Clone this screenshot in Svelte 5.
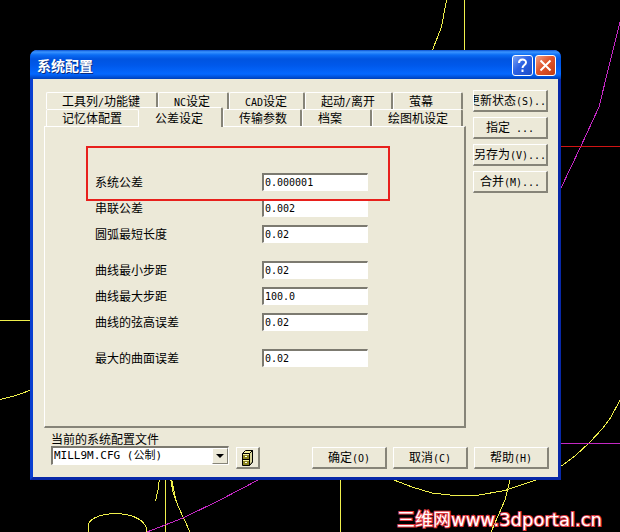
<script lang="ts">
  interface Field {
    id: string;
    label: string;
    value: string;
    marked?: boolean;
  }

  const backTabs = ['工具列/功能键', 'NC设定', 'CAD设定', '起动/离开', '萤幕'];
  const frontTabs = ['记忆体配置', '公差设定', '传输参数', '档案', '绘图机设定'];
  const sideButtons = ['更新状态(S)...', '指定 ...', '另存为(V)...', '合并(M)...'];
  const footerButtons = ['确定(O)', '取消(C)', '帮助(H)'];

  let active = $state('公差设定');

  let groups: Field[][] = $state([
    [
      { id: 'system', label: '系统公差', value: '0.000001', marked: true },
      { id: 'chain', label: '串联公差', value: '0.002' },
      { id: 'arc', label: '圆弧最短长度', value: '0.02' }
    ],
    [
      { id: 'min-step', label: '曲线最小步距', value: '0.02' },
      { id: 'max-step', label: '曲线最大步距', value: '100.0' },
      { id: 'chord', label: '曲线的弦高误差', value: '0.02' }
    ],
    [{ id: 'surface', label: '最大的曲面误差', value: '0.02' }]
  ]);

  // split into half-width and full-width runs
  function runs(text: string) {
    return text.match(/[\x20-\x7e]+|[^\x20-\x7e]+/g) ?? [];
  }
</script>

{#snippet mixed(text: string)}
  <span class="mixed">{#each runs(text) as run}<span class:half={/^[\x20-\x7e]/.test(run)}>{run}</span>{/each}</span>
{/snippet}

{#snippet tabRow(tabs: string[], kind: string)}
  <div class="tab-row {kind}" role="tablist">
    {#each tabs as tab}
      <button
        class="tab"
        class:active={tab === active}
        role="tab"
        aria-selected={tab === active}
        onclick={() => (active = tab)}
      >
        {@render mixed(tab)}
      </button>
    {/each}
  </div>
{/snippet}

<main class="desktop">
  <svg class="drawing" aria-hidden="true">
    <g class="yellow">
      <path d="M446.500 0L441.500 27L432.500 50" />
      <path d="M464.500 0V52" />
      <path d="M0 320.500H32" />
      <path d="M0 399.500L16 395.500L31 390" />
      <path d="M159.500 478L158 490L155.500 501" />
      <path d="M165.500 478V532" />
      <path d="M170.500 478L173 492L178 506L190 532" />
      <path d="M171.500 478L175.500 498" />
      <path d="M88.500 532V524C94 510 140 509 146.500 528V532" />
      <path d="M340.500 478V532" />
      <path d="M394 480L412 487L432 493L454 495.500H476L505 490.500L536 480" />
      <path d="M510.500 478L505 500L491 532" />
      <path d="M560 467L575 456L590 442L603 428L611 417L620 400" />
    </g>
    <g class="magenta">
      <path d="M620 22L610 62L599 107L581 146L561 188" />
      <path d="M560 443.500H2000" />
      <path d="M147 532L183 518L220 500L260 479" />
    </g>
    <path class="red" d="M560 146.500H2000" />
  </svg>

  <section class="dialog" aria-labelledby="dialog-title">
    <header class="titlebar">
      <h1 id="dialog-title">系统配置</h1>
      <button class="caption help" aria-label="帮助">
        <svg viewBox="0 0 19 19">
          <path d="M6 7C6 2.500 13 2.500 13 6.500C13 9 9.500 9 9.500 12M9.500 13.500V16" />
        </svg>
      </button>
      <button class="caption close" aria-label="关闭">
        <svg viewBox="0 0 19 19"><path d="M4.500 4.500L14.500 14.500M14.500 4.500L4.500 14.500" /></svg>
      </button>
    </header>

    <div class="body">
      <div class="top">
        <div class="tabs">
          {@render tabRow(backTabs, 'back')}
          {@render tabRow(frontTabs, 'front')}
          <div class="panel" role="tabpanel">
            {#each groups as group}
              <div class="group">
                {#each group as field (field.id)}
                  <div class="field" class:marked={field.marked}>
                    <label for={field.id}>{field.label}</label>
                    <input id={field.id} type="text" bind:value={field.value} />
                  </div>
                {/each}
              </div>
            {/each}
          </div>
        </div>

        <div class="side">
          {#each sideButtons as text}
            <button class="push">{@render mixed(text)}</button>
          {/each}
        </div>
      </div>

      <footer class="footer">
        <div class="file">
          <label for="config">当前的系统配置文件</label>
          <div class="combo">
            <select id="config">
              <option>MILL9M.CFG (公制)</option>
            </select>
            <span class="arrow" aria-hidden="true"></span>
          </div>
        </div>
        <button class="cabinet" aria-label="选择文件">
          <svg viewBox="0 0 14 18">
            <path d="M1.500 4.500L4.500 1.500H11.500V13L8.500 16.500H1.500Z" fill="#f4f0a0" stroke="#000" />
            <path d="M8.500 4.500L11.500 1.500V13L8.500 16.500Z" fill="#d8d49c" stroke="#000" />
            <path d="M1.500 4.500H8.500M1.500 10.500H8.500" stroke="#000" />
            <path d="M2 6H8V10H2ZM2 12H8V16H2Z" fill="#8a8420" />
            <path d="M4 7.500H6M4 13.500H6" stroke="#fff" />
          </svg>
        </button>
        <div class="actions">
          {#each footerButtons as text}
            <button class="push">{@render mixed(text)}</button>
          {/each}
        </div>
      </footer>
    </div>
  </section>

  <p class="watermark">三维网www.3dportal.cn</p>
</main>

<style>
  :global(body) {
    margin: 0;
    background: #000;
  }

  .desktop {
    position: relative;
    box-sizing: border-box;
    min-height: 100vh;
    padding: 50px 59px 52px 30px;
    overflow: hidden;
    background: #000;
    color: #000;
    font: 12px/14px 'Noto Sans CJK SC', sans-serif;
  }

  .drawing {
    position: absolute;
    inset: 0;
    width: 100%;
    height: 100%;
    fill: none;
    shape-rendering: crispEdges;
  }

  .yellow {
    stroke: #f0f04c;
  }

  .magenta {
    stroke: #c428c4;
  }

  .red {
    stroke: #d01414;
  }

  .dialog {
    position: relative;
    border: 3px solid #0a3fd0;
    border-top: 0;
    border-right-color: #0828a8;
    border-bottom-color: #0828a8;
    border-radius: 7px 7px 0 0;
    background: #ece9d8;
  }

  .titlebar {
    display: flex;
    align-items: center;
    gap: 2px;
    height: 29px;
    margin: 0 -3px;
    padding: 1px 5px 0 7px;
    box-sizing: border-box;
    border-radius: 7px 7px 0 0;
    background: linear-gradient(#0a50d0 0, #3a94ff 2px, #0a6cf4 5px, #0054e0 9px, #0058ea 15px, #0468ff 24px, #0050d8 27px, #0040b8);
  }

  h1 {
    flex: 1;
    margin: 0;
    color: #fff;
    font-size: 14px;
    font-weight: 700;
    line-height: 20px;
    text-shadow: 1px 1px 0 #0a2c80;
  }

  button,
  input,
  select {
    margin: 0;
    padding: 0;
    border-radius: 0;
    box-sizing: border-box;
    color: #000;
    font: inherit;
  }

  .caption {
    width: 21px;
    height: 21px;
    border: 1px solid #fff;
    border-radius: 3px;
    background: linear-gradient(135deg, #7da4f4, #2c62e4 45%, #1c4cc8);
  }

  .caption.close {
    background: linear-gradient(135deg, #f0a088, #e0552c 45%, #c03c14);
  }

  .caption svg {
    display: block;
    fill: none;
    stroke: #fff;
    stroke-width: 2;
  }

  .body {
    padding: 11px 10px 8px 11px;
  }

  .top {
    display: flex;
    gap: 7px;
  }

  .tabs {
    flex: 1;
    min-width: 0;
    padding-top: 2px;
  }

  .tab-row {
    display: grid;
    margin: 0 3px 0 2px;
  }

  .tab-row.back {
    grid-template-columns: 112fr 71fr 76fr 88fr 70fr;
  }

  .tab-row.front {
    grid-template-columns: 93fr 84fr 79fr 70fr 91fr;
  }

  .tab {
    height: 17px;
    padding-left: 15px;
    border: 1px solid #fff;
    border-right: 2px solid #868478;
    border-bottom: 0;
    border-radius: 2px 2px 0 0;
    background: #ece9d8;
    text-align: left;
    line-height: 16px;
  }

  .tab:has(+ .active) {
    border-right: 1px solid #fff;
  }

  .tab.active {
    position: relative;
    height: 20px;
    margin: -2px 0 -1px;
    border-left-color: #ece9d8;
    line-height: 17px;
  }

  .mixed {
    white-space: pre;
  }

  .half {
    font-family: 'DejaVu Sans Mono', monospace;
    font-size: 10px;
  }

  .panel {
    display: flex;
    flex-direction: column;
    gap: 18px;
    padding: 46px 96px 59px 50px;
    border: 1px solid #fff;
    border-right: 2px solid #868478;
    border-bottom: 2px solid #868478;
  }

  .group {
    display: flex;
    flex-direction: column;
    gap: 8px;
  }

  .field {
    position: relative;
    display: flex;
    align-items: center;
    justify-content: space-between;
    height: 18px;
  }

  .field.marked::after {
    content: '';
    position: absolute;
    inset: -27px -22px -10px -9px;
    z-index: 1;
    border: 2px solid #e8201c;
    pointer-events: none;
  }

  .field input {
    width: 106px;
    height: 18px;
    padding: 0 1px;
    border: 2px solid #7c7a70;
    border-right: 1px solid #fff;
    border-bottom: 1px solid #fff;
    background: #fff;
    font: 10px/14px 'DejaVu Sans Mono', monospace;
  }

  .side {
    display: flex;
    flex-direction: column;
    gap: 5px;
  }

  .push,
  .cabinet {
    border: 2px solid #fff;
    border-top-width: 1px;
    border-left-width: 1px;
    border-right-color: #868478;
    border-bottom-color: #868478;
    background: #ece9d8;
  }

  .push {
    display: flex;
    align-items: center;
    justify-content: center;
    width: 75px;
    height: 22px;
    overflow: hidden;
  }

  .footer {
    display: flex;
    align-items: flex-end;
    gap: 7px;
    padding: 4px 0 0 7px;
  }

  .file {
    width: 178px;
    padding-bottom: 4px;
  }

  .file label {
    display: block;
  }

  .combo {
    position: relative;
  }

  .combo select {
    display: block;
    width: 100%;
    height: 19px;
    padding: 0 20px 0 1px;
    appearance: none;
    border: 2px solid #7c7a70;
    border-right: 1px solid #fff;
    border-bottom: 1px solid #fff;
    background: #fff;
    font-family: 'DejaVu Sans Mono', 'Noto Sans CJK SC', monospace;
    font-size: 11px;
  }

  .arrow {
    position: absolute;
    top: 2px;
    right: 1px;
    display: grid;
    place-items: center;
    width: 16px;
    height: 16px;
    box-sizing: border-box;
    border: 1px solid #fff;
    border-right-color: #868478;
    border-bottom-color: #868478;
    background: #ece9d8;
    pointer-events: none;
  }

  .arrow::before {
    content: '';
    border: 4px solid transparent;
    border-top-color: #000;
    border-bottom: 0;
  }

  .cabinet {
    display: grid;
    place-items: center;
    width: 24px;
    height: 22px;
  }

  .cabinet svg {
    width: 14px;
    height: 18px;
    fill: none;
  }

  .actions {
    display: flex;
    gap: 6px;
    margin-right: -1px;
    margin-left: auto;
  }

  .watermark {
    position: absolute;
    right: 18px;
    bottom: 2px;
    margin: 0;
    color: #fff;
    font: 18px/20px 'DejaVu Sans', 'Noto Sans CJK SC', sans-serif;
    -webkit-text-stroke: 2px #e03840;
    paint-order: stroke fill;
  }
</style>
